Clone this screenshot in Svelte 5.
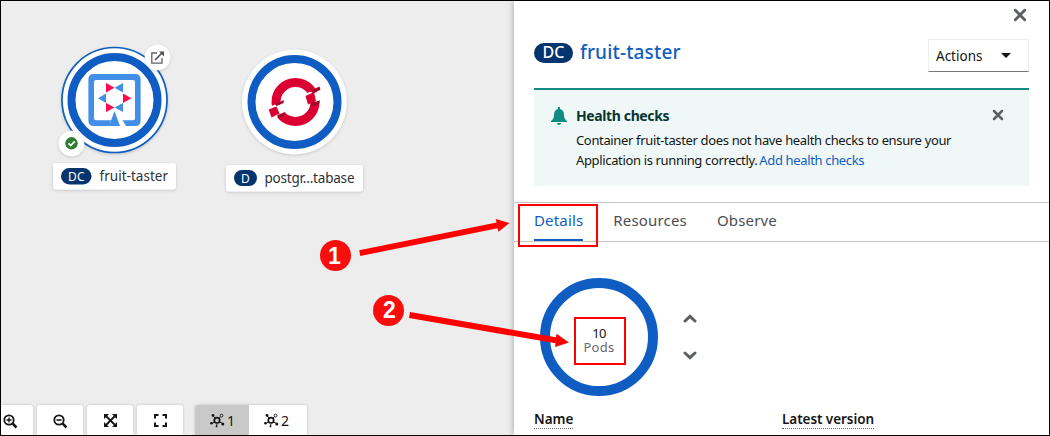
<script>
  const tabs = ['Details', 'Resources', 'Observe'];
  let active = $state('Details');
</script>

{#snippet cross(size)}
  <svg width={size} height={size} viewBox="0 0 12 12"><path d="M2 2L10 10M10 2L2 10" stroke="#5c5f63" stroke-width="2.5" stroke-linecap="round" /></svg>
{/snippet}

{#snippet graph()}
  <svg width="15" height="15" viewBox="0 0 15 15" fill="none" stroke="#151515">
    <circle cx="7" cy="7.300" r="2.700" stroke-width="1.700" />
    <path d="M4.900 5L3 2.600M9 5.300L10.500 3.600M4.700 9L2 10.300M7 10.500L6.500 13.500M9.500 9L12.500 10.500" stroke-width="1" />
    <circle cx="11.500" cy="2.600" r="1.400" stroke-width=".9" />
    <g fill="#151515" stroke="none"><circle cx="3" cy="2.400" r="1.400" /><circle cx="1.400" cy="10.300" r="1.300" /><circle cx="6.500" cy="13.400" r=".9" /><circle cx="12.800" cy="10.900" r="1.500" /></g>
  </svg>
{/snippet}

<div class="app">
  <main class="canvas">
    <svg class="topology" width="513" height="404" viewBox="1 1 513 404">
      <defs>
        <filter id="soft" x="-20%" y="-20%" width="140%" height="150%"><feDropShadow dx="0" dy="1" stdDeviation="1.5" flood-opacity=".18" /></filter>
      </defs>
      <g>
        <circle cx="114.5" cy="100" r="52.5" fill="#fff" stroke="#0f5dc3" stroke-width="1.7" filter="url(#soft)" />
        <circle cx="114.5" cy="100" r="43" fill="#fff" stroke="#0f5dc3" stroke-width="8" />
        <path fill="#418fe6" fill-rule="evenodd" d="M93.500 74H135.500Q140.600 74 140.600 79.500V120.500Q140.600 126 135.500 126H126L122.500 120.300H133Q135 120.300 135 118.300V82Q135 80 133 80H96Q94 80 94 82V118.300Q94 120.300 96 120.300H111L109.500 126H94Q88.400 126 88.400 120.500V79.500Q88.400 74 93.500 74Z" />
        <path fill="#418fe6" d="M114.500 111L120 126H109Z" />
        <path fill="#ff0a4d" d="M106 83L114.500 87.700L106 92.500ZM123 93.500L131.500 98.200L123 103ZM106 103L114.500 107.500L106 112Z" />
        <path fill="#418fe6" d="M123 83L114.500 87.700L123 92.500ZM106 93.500L98 98.200L106 103ZM123 103L114.500 107.500L123 112Z" />
        <g filter="url(#soft)"><circle cx="157.500" cy="57.500" r="12.800" fill="#fff" /><circle cx="71.500" cy="143.500" r="12.800" fill="#fff" /></g>
        <path d="M157 53H151.800V63.200H162V58" fill="none" stroke="#5c5f63" stroke-width="1.300" />
        <path d="M155 60L162 53" stroke="#4b4e52" stroke-width="1.600" /><path d="M159 51.500H164V56.500Z" fill="#4b4e52" />
        <circle cx="71.500" cy="143.300" r="6.200" fill="#2f7b31" /><path d="M68.500 143.300L70.700 145.500L74.700 141.300" fill="none" stroke="#fff" stroke-width="1.700" />
        <rect x="53" y="163" width="123" height="26.500" rx="3" fill="#fff" filter="url(#soft)" />
        <rect x="61" y="168" width="30.500" height="16.500" rx="8.250" fill="#05346e" />
        <text x="68" y="180.500" class="kind" textLength="16.500">DC</text>
        <text x="99.500" y="181" class="name" textLength="68.500">fruit-taster</text>
      </g>
      <g>
        <circle cx="294.500" cy="102" r="52.300" fill="#fff" filter="url(#soft)" />
        <circle cx="294.500" cy="102" r="43" fill="#fff" stroke="#0f5dc3" stroke-width="8" />
        <circle cx="295.500" cy="102" r="19.500" fill="none" stroke="#db0032" stroke-width="9" />
        <path fill="#fff" d="M313 93.500L323 89.500V99.500L315 102ZM303 94L312 91.500L314 93L305 97ZM303 98H306.500L308 106L303 106ZM276 106L287 102V111L279 114.500ZM268 107L276 104.500L277 106.500L267 110ZM267 117L279 113.500L277 118L270 121Z" />
        <path fill="#db0032" d="M305.500 96L314 92L316 101L308 104.500ZM268.700 109.500L276.500 106.500L279.500 113.500L271.500 117.500Z" />
        <path fill="#9d0c27" d="M311 90.500L319.500 86.500L320.500 90L312 93ZM311 103.500L320 100.500L319 104L311 106.500ZM275.500 104L284 100L283.500 103L276 106ZM277 115.500L285.500 112.500L284 116L279 118Z" />
        <rect x="226" y="165" width="137" height="26.500" rx="3" fill="#fff" filter="url(#soft)" />
        <rect x="234" y="170" width="23" height="16" rx="8" fill="#05346e" />
        <text x="241" y="182.500" class="kind" textLength="8.500">D</text>
        <text x="264.500" y="183" class="name" textLength="90">postgr...tabase</text>
      </g>
    </svg>

    <div class="toolbar">
      <button class="tool first" aria-label="Zoom in"><svg width="15" height="15" viewBox="0 0 15 15" fill="none" stroke="#151515"><circle cx="6" cy="6" r="4.700" stroke-width="1.800" /><path d="M9.700 9.700L13.500 13.500" stroke-width="2.500" /><path d="M3.500 6H8.500M6 3.500V8.500" stroke-width="1.300" /></svg></button>
      <button class="tool" aria-label="Zoom out"><svg width="15" height="15" viewBox="0 0 15 15" fill="none" stroke="#151515"><circle cx="6" cy="6" r="4.700" stroke-width="1.800" /><path d="M9.700 9.700L13.500 13.500" stroke-width="2.500" /><path d="M3.500 6H8.500" stroke-width="1.600" /></svg></button>
      <button class="tool" aria-label="Fit"><svg width="13" height="13" viewBox="0 0 13 13" fill="#151515"><path d="M2 2L11 11M11 2L2 11" stroke="#151515" stroke-width="1.800" /><path d="M0 0H5L0 5ZM13 0V5L8 0ZM0 13V8L5 13ZM13 13H8L13 8Z" /></svg></button>
      <button class="tool" aria-label="Reset"><svg width="13" height="13" viewBox="0 0 13 13" fill="none" stroke="#151515" stroke-width="2"><path d="M1 4.500V1H4.500M8.500 1H12V4.500M12 8.500V12H8.500M4.500 12H1V8.500" /></svg></button>
      <div class="layouts">
        <button class="chosen">{@render graph()}<span>1</span></button>
        <button>{@render graph()}<span>2</span></button>
      </div>
    </div>
  </main>

  <aside class="panel">
    <div class="closebar">{@render cross(14)}</div>
    <header>
      <span class="badge">DC</span><h1>fruit-taster</h1>
      <button class="actions"><span>Actions</span><i></i></button>
    </header>
    <section class="alert">
      <svg class="bell" width="16" height="18" viewBox="0 0 16 18" fill="#128b83"><path d="M7 0H9V2Q13 3 13 8Q13 12 16 14V15H0V14Q3 12 3 8Q3 3 7 2ZM6 16H10Q10 18 8 18Q6 18 6 16Z" /></svg>
      <div class="message">
        <h2>Health checks</h2>
        <p>Container fruit-taster does not have health checks to ensure your<br />Application is running correctly. <a href="#health">Add health checks</a></p>
      </div>
      <div class="dismiss">{@render cross(12)}</div>
    </section>
    <nav>
      {#each tabs as tab}
        <button class:active={active === tab} onclick={() => (active = tab)}>{tab}</button>
      {/each}
    </nav>
    <div class="scale">
      <div class="donut"><span class="count">10</span><span class="pods">Pods</span></div>
      <div class="steps">
        <svg width="14" height="9" viewBox="0 0 14 9"><path d="M2 7L7 2.300L12 7" /></svg>
        <svg width="14" height="9" viewBox="0 0 14 9"><path d="M2 2L7 6.700L12 2" /></svg>
      </div>
    </div>
    <div class="facts"><span class="term">Name</span><span class="term">Latest version</span></div>
  </aside>

  <svg class="notes" width="1050" height="436" viewBox="0 0 1050 436">
    <g fill="none" stroke="#f00" stroke-width="2"><rect x="519" y="205" width="78" height="41" /><rect x="575" y="318" width="50" height="46" /></g>
    <g fill="#f00">
      <path d="M359.200 250.300L496.600 222.600L495.700 219L509.500 223L498.500 231.800L497.600 228.200L360.300 256Z" />
      <path d="M410 312L556 337.200L556.500 333.800L569 342.500L555 347L555.500 343.300L409 318Z" />
    </g>
    <g fill="#f90d0d"><circle cx="335.500" cy="255.500" r="15.500" /><circle cx="388.500" cy="310.500" r="15.500" /></g>
    <text x="334.500" y="264">1</text><text x="389.500" y="318">2</text>
  </svg>
</div>

<style>
  .app { position: relative; box-sizing: border-box; width: 1050px; height: 436px; border: 1px solid #000; display: grid; grid-template-columns: 513px 1fr; overflow: hidden; background: #ededed; color: #151515; font-family: "Noto Sans", sans-serif; }
  button { font: inherit; color: inherit; background: #fff; border: 0; padding: 0; }
  svg { display: block; flex: none; }
  h1, h2, p { margin: 0; font-weight: 400; }
  .canvas { display: flex; flex-direction: column; height: 434px; min-width: 0; }
  .kind { fill: #fff; font-size: 12px; }
  .name { fill: #303236; font-size: 13.5px; }
  .toolbar { display: flex; gap: 4px; height: 30px; }
  .tool { width: 46px; display: flex; justify-content: center; padding: 9px 0 0; box-sizing: border-box; border-radius: 3px 3px 0 0; box-shadow: 0 0 3px #0003; align-items: flex-start; }
  .first { width: 32px; justify-content: flex-start; padding-left: 2px; border-top-left-radius: 0; }
  .layouts { display: flex; margin-left: 8px; box-shadow: 0 0 3px #0003; border-radius: 3px 3px 0 0; overflow: hidden; }
  .layouts button { width: 58px; display: flex; gap: 2px; padding: 8px 0 0 15px; box-sizing: border-box; font-size: 14px; line-height: 16px; }
  .layouts .chosen { width: 54px; background: #c9c9c9; }
  .panel { background: #fff; height: 434px; box-shadow: 0 0 7px #0005; display: flex; flex-direction: column; min-width: 0; }
  .closebar { height: 38px; box-sizing: border-box; padding: 7px 22px 0 0; display: flex; justify-content: flex-end; }
  header { display: flex; align-items: center; height: 33px; padding: 0 20px; }
  .badge { width: 39px; height: 20px; margin-top: -5px; border-radius: 10px; background: #05346e; color: #fff; font-size: 16px; line-height: 19px; text-align: center; font-weight: 500; }
  h1 { margin: -8px auto 0 7px; color: #0f5dc3; font-size: 19px; line-height: 26px; font-weight: 500; letter-spacing: .15px; }
  .actions { width: 101px; height: 33px; box-sizing: border-box; border: 1px solid #ededed; border-bottom-color: #77797d; display: flex; align-items: center; justify-content: space-between; padding: 0 17px 0 7px; font-size: 13.5px; }
  .actions i { border: 5px solid transparent; border-top-color: #151515; border-bottom: 0; }
  .alert { height: 98px; margin: 16px 20px 0; box-sizing: border-box; border-top: 2px solid #128b83; background: #eff8f7; display: flex; padding: 17px 25px 0 17px; }
  .message { margin-left: 9px; flex: 1; white-space: nowrap; }
  h2 { color: #083531; font-weight: 700; font-size: 14px; line-height: 18px; letter-spacing: -.38px; }
  p { font-size: 13px; line-height: 20px; margin-top: 5px; letter-spacing: -.35px; }
  a { color: #0f5dc3; text-decoration: none; margin-left: -1px; }
  .dismiss { padding-top: 2px; }
  nav { margin-top: 16px; height: 40px; box-sizing: border-box; border-top: 1px solid #c4c4c4; border-bottom: 1px solid #c4c4c4; padding-left: 20px; display: flex; gap: 30px; }
  nav button { height: 38px; box-sizing: border-box; padding-bottom: 2px; font-size: 15px; letter-spacing: .17px; color: #4b4e52; border-bottom: 2px solid transparent; }
  nav .active { color: #0f5dc3; border-color: #0f5dc3; }
  .scale { display: flex; align-items: center; padding: 36px 0 0 26px; height: 118px; }
  .donut { width: 118px; height: 118px; box-sizing: border-box; border: 10px solid #0f5dc3; border-radius: 50%; display: flex; flex-direction: column; align-items: center; justify-content: center; font-size: 13px; line-height: 14px; padding-top: 5px; }
  .count { letter-spacing: -.6px; }
  .pods { color: #66696d; letter-spacing: .3px; }
  .steps { margin-left: 25px; display: grid; gap: 28px; }
  .steps path { fill: none; stroke: #5c5f63; stroke-width: 3; stroke-linecap: round; }
  .facts { display: grid; grid-template-columns: 248px 1fr; margin: 14px 0 0 20px; font-size: 13.500px; line-height: 18px; font-weight: 600; letter-spacing: -.06px; }
  .term { justify-self: start; border-bottom: 1px dotted #666; }
  .notes { position: absolute; left: -1px; top: -1px; pointer-events: none; }
  .notes text { fill: #fff; font: bold 23px "Liberation Sans", sans-serif; text-anchor: middle; }
</style>
